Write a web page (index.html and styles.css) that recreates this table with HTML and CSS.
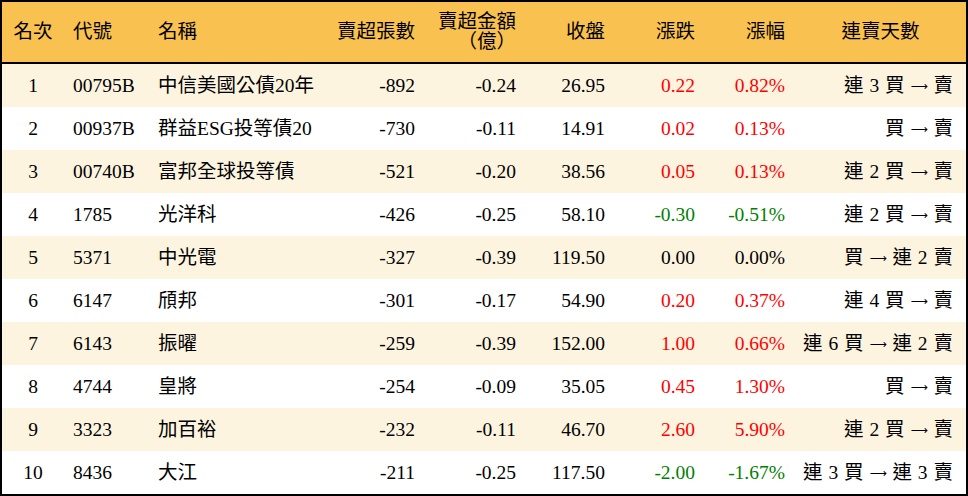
FILE: index.html
```html
<!DOCTYPE html>
<html lang="zh-Hant">
<head>
<meta charset="utf-8">
<link rel="stylesheet" href="styles.css">
</head>
<body>
<table class="rank">
  <colgroup>
    <col class="c-rank"><col class="c-code"><col class="c-name"><col class="c-vol"><col class="c-amt">
    <col class="c-close"><col class="c-chg"><col class="c-pct"><col class="c-days">
  </colgroup>
  <thead>
    <tr>
      <th class="center">名次</th>
      <th class="left">代號</th>
      <th class="left">名稱</th>
      <th class="right">賣超張數</th>
      <th class="right">賣超金額<br>（億）</th>
      <th class="right">收盤</th>
      <th class="right">漲跌</th>
      <th class="right">漲幅</th>
      <th class="center days-h">連賣天數</th>
    </tr>
  </thead>
  <tbody>
    <tr><td class="center">1</td><td class="left">00795B</td><td class="left">中信美國公債20年</td><td class="right">-892</td><td class="right">-0.24</td><td class="right">26.95</td><td class="right up">0.22</td><td class="right up">0.82%</td><td class="right days">連 3 買 <span class="arrow">⟶</span> 賣</td></tr>
    <tr><td class="center">2</td><td class="left">00937B</td><td class="left">群益ESG投等債20</td><td class="right">-730</td><td class="right">-0.11</td><td class="right">14.91</td><td class="right up">0.02</td><td class="right up">0.13%</td><td class="right days">買 <span class="arrow">⟶</span> 賣</td></tr>
    <tr><td class="center">3</td><td class="left">00740B</td><td class="left">富邦全球投等債</td><td class="right">-521</td><td class="right">-0.20</td><td class="right">38.56</td><td class="right up">0.05</td><td class="right up">0.13%</td><td class="right days">連 2 買 <span class="arrow">⟶</span> 賣</td></tr>
    <tr><td class="center">4</td><td class="left">1785</td><td class="left">光洋科</td><td class="right">-426</td><td class="right">-0.25</td><td class="right">58.10</td><td class="right down">-0.30</td><td class="right down">-0.51%</td><td class="right days">連 2 買 <span class="arrow">⟶</span> 賣</td></tr>
    <tr><td class="center">5</td><td class="left">5371</td><td class="left">中光電</td><td class="right">-327</td><td class="right">-0.39</td><td class="right">119.50</td><td class="right">0.00</td><td class="right">0.00%</td><td class="right days">買 <span class="arrow">⟶</span> 連 2 賣</td></tr>
    <tr><td class="center">6</td><td class="left">6147</td><td class="left">頎邦</td><td class="right">-301</td><td class="right">-0.17</td><td class="right">54.90</td><td class="right up">0.20</td><td class="right up">0.37%</td><td class="right days">連 4 買 <span class="arrow">⟶</span> 賣</td></tr>
    <tr><td class="center">7</td><td class="left">6143</td><td class="left">振曜</td><td class="right">-259</td><td class="right">-0.39</td><td class="right">152.00</td><td class="right up">1.00</td><td class="right up">0.66%</td><td class="right days">連 6 買 <span class="arrow">⟶</span> 連 2 賣</td></tr>
    <tr><td class="center">8</td><td class="left">4744</td><td class="left">皇將</td><td class="right">-254</td><td class="right">-0.09</td><td class="right">35.05</td><td class="right up">0.45</td><td class="right up">1.30%</td><td class="right days">買 <span class="arrow">⟶</span> 賣</td></tr>
    <tr><td class="center">9</td><td class="left">3323</td><td class="left">加百裕</td><td class="right">-232</td><td class="right">-0.11</td><td class="right">46.70</td><td class="right up">2.60</td><td class="right up">5.90%</td><td class="right days">連 2 買 <span class="arrow">⟶</span> 賣</td></tr>
    <tr><td class="center">10</td><td class="left">8436</td><td class="left">大江</td><td class="right">-211</td><td class="right">-0.25</td><td class="right">117.50</td><td class="right down">-2.00</td><td class="right down">-1.67%</td><td class="right days">連 3 買 <span class="arrow">⟶</span> 連 3 賣</td></tr>
  </tbody>
</table>
</body>
</html>
```
FILE: styles.css
```css
html, body {
  margin: 0;
  padding: 0;
  background: #ffffff;
}

.rank {
  width: 968px;
  border-collapse: separate;
  border-spacing: 0;
  table-layout: fixed;
  border: 2px solid #000;
  font-family: "Liberation Serif", "Noto Sans CJK TC", serif;
  font-size: 19.5px;
  color: #000;
}

.c-rank { width: 62px; }
.c-code { width: 85px; }
.c-name { width: 181px; }
.c-vol { width: 95px; }
.c-amt { width: 101px; }
.c-close { width: 89px; }
.c-chg { width: 90px; }
.c-pct { width: 90px; }
.c-days { width: 171px; }

.rank thead th {
  height: 60px;
  padding: 0;
  background: #f9c14f;
  border-bottom: 2px solid #000;
  font-weight: normal;
  line-height: 20px;
  vertical-align: middle;
  white-space: nowrap;
}

.rank tbody td {
  height: 43px;
  padding: 0;
  line-height: 22px;
  vertical-align: middle;
  white-space: nowrap;
}

.rank tbody tr:nth-child(odd) td {
  background: #fdf4e0;
}

.center { text-align: center; }
.left { text-align: left; padding-left: 9px !important; }
.right { text-align: right; padding-right: 10px !important; }
.days { padding-right: 13px !important; word-spacing: 1px; }
.days-h { text-align: center; }

.arrow {
  font-family: "DejaVu Sans", sans-serif;
  font-size: 12px;
  vertical-align: 2px;
}

.up { color: #ff0000; }
.down { color: #008000; }
```
